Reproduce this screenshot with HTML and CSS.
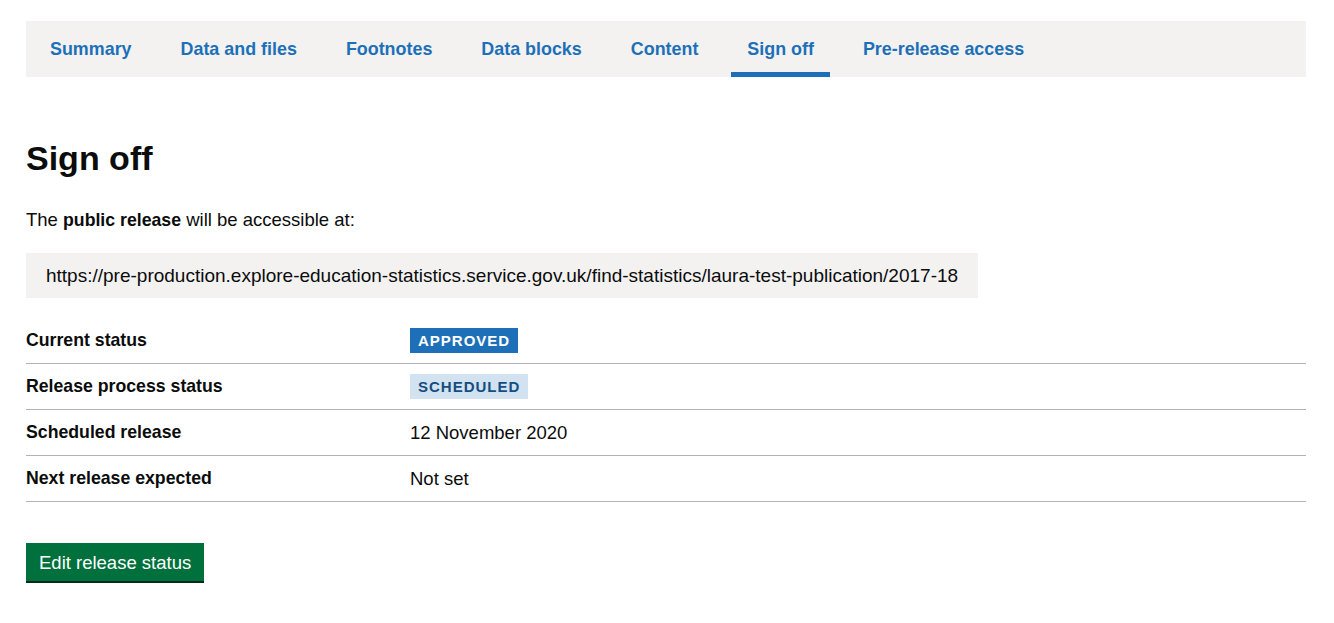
FILE: index.html
```html
<!DOCTYPE html>
<html lang="en">
<head>
<meta charset="utf-8">
<title>Sign off</title>
<link rel="stylesheet" href="styles.css">
</head>
<body>
<div class="page">
  <nav class="tabs">
    <a class="tab" href="#">Summary</a>
    <a class="tab" href="#">Data and files</a>
    <a class="tab" href="#">Footnotes</a>
    <a class="tab" href="#">Data blocks</a>
    <a class="tab" href="#">Content</a>
    <a class="tab tab--active" href="#">Sign off</a>
    <a class="tab" href="#">Pre-release access</a>
  </nav>

  <main class="content">
    <h1 class="heading">Sign off</h1>
    <p class="body">The <strong>public release</strong> will be accessible at:</p>
    <div class="url-box">https://pre-production.explore-education-statistics.service.gov.uk/find-statistics/laura-test-publication/2017-18</div>

    <dl class="summary">
      <div class="summary__row">
        <dt class="summary__key">Current status</dt>
        <dd class="summary__value"><span class="tag">Approved</span></dd>
      </div>
      <div class="summary__row">
        <dt class="summary__key">Release process status</dt>
        <dd class="summary__value"><span class="tag tag--light">Scheduled</span></dd>
      </div>
      <div class="summary__row">
        <dt class="summary__key">Scheduled release</dt>
        <dd class="summary__value">12 November 2020</dd>
      </div>
      <div class="summary__row">
        <dt class="summary__key">Next release expected</dt>
        <dd class="summary__value">Not set</dd>
      </div>
    </dl>

    <button class="button" type="button">Edit release status</button>
  </main>
</div>
</body>
</html>
```

FILE: styles.css
```css
* { box-sizing: border-box; }

html, body {
  margin: 0;
  padding: 0;
  background: #ffffff;
}

body {
  font-family: "Liberation Sans", Arial, sans-serif;
  color: #0b0c0c;
  font-size: 18.5px;
  line-height: 25px;
}

strong, .summary__key {
  font-size: 17.7px;
}

.page {
  padding: 21px 28px 40px 26px;
}

.tabs {
  display: flex;
  background: #f3f2f1;
  height: 56px;
  padding-left: 8px;
  gap: 17px;
}

.tab {
  display: flex;
  align-items: center;
  padding: 5px 16px 0;
  color: #1d70b8;
  font-weight: bold;
  font-size: 17.9px;
  text-decoration: none;
  border-bottom: 5px solid transparent;
}

.tab--active {
  border-bottom-color: #1d70b8;
}

.content {
  padding-top: 61px;
}

.heading {
  margin: 0 0 29px;
  font-size: 34px;
  line-height: 40px;
  font-weight: bold;
}

.body {
  margin: 0 0 20px;
}

.url-box {
  display: inline-block;
  background: #f3f2f1;
  padding: 10px 20px;
  font-size: 19px;
  line-height: 25px;
  margin-bottom: 20px;
}

.summary {
  margin: 0 0 41px;
}

.summary__row {
  display: flex;
  align-items: center;
  border-bottom: 1px solid #b1b4b6;
}

.summary__key {
  width: 30%;
  font-weight: bold;
  margin: 0;
  padding: 10px 0;
  line-height: 25px;
}

.summary__value {
  margin: 0;
  padding: 10px 0;
  line-height: 25px;
}

.tag {
  display: inline-block;
  vertical-align: top;
  background: #1d70b8;
  color: #ffffff;
  font-weight: bold;
  font-size: 15px;
  line-height: 17px;
  letter-spacing: 1px;
  text-transform: uppercase;
  padding: 4px 8px;
}

.tag--light {
  background: #d2e2f1;
  color: #144e81;
}

.button {
  font-family: inherit;
  font-size: 18.5px;
  line-height: 25px;
  color: #ffffff;
  background: #00703c;
  border: 0;
  border-radius: 0;
  box-shadow: 0 2px 0 #002d18;
  padding: 7px 13px 6px;
  cursor: pointer;
}
```
